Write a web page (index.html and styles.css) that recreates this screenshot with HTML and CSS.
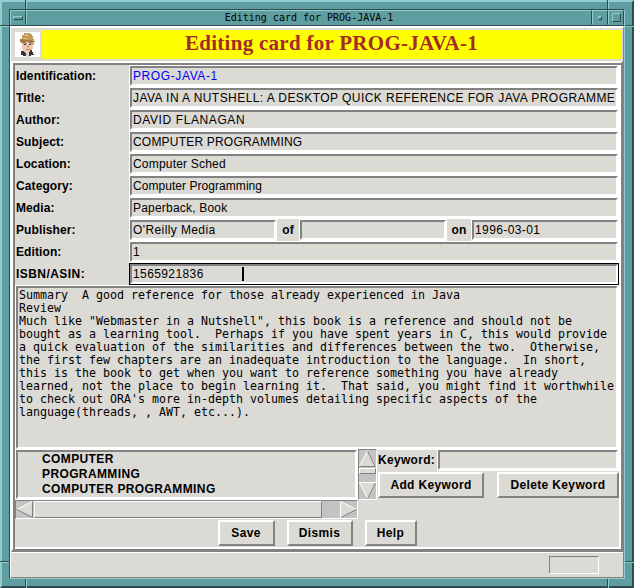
FILE: index.html
```html
<!DOCTYPE html>
<html lang="en">
<head>
<meta charset="utf-8">
<title>Editing card for PROG-JAVA-1</title>
<link rel="stylesheet" href="styles.css">
</head>
<body>
<div class="window">
  <i class="tick th tl1"></i><i class="tick th tr1"></i><i class="tick th bl1"></i><i class="tick th br1"></i>
  <i class="tick tv tl2"></i><i class="tick tv tr2"></i><i class="tick tv bl2"></i><i class="tick tv br2"></i>
  <div class="inner">
    <div class="titlebar">
      <span class="tb-btn menu"><i></i></span>
      <span class="tb-title"><span>Editing card for PROG-JAVA-1</span></span>
      <span class="tb-btn min"><i></i></span>
      <span class="tb-btn max"><i></i></span>
    </div>
    <div class="content">
      <header class="banner">
        <svg class="face" width="25" height="25" viewBox="0 0 25 25" shape-rendering="crispEdges">
          <path fill="#fff" d="M0 0h25v25H0z"/>
          <path fill="#c39a5e" d="M9 1h6v1h2v2h1v3h1v2H6V7h1V3h2z"/>
          <path fill="#a67a3c" d="M5 7h3v1h9v1h3v1h-2v1H6v-1H5z"/>
          <path fill="#e0bd86" d="M10 2h3v2h-3zM9 6h3v1H9z"/>
          <path fill="#efc5ab" d="M7 10h11v7h-1v3h-2v2h-5v-2H8v-3H7z"/>
          <path fill="#a67a3c" d="M6 9h13v1h-1v1h-4v-1h-3v1H6z"/>
          <path fill="#9a9da0" d="M8 11h4v1H8zM14 11h5v1h-5zM18 12h1v1h-1z"/>
          <path fill="#54463f" d="M9 12h2v1H9zM14 12h2v1h-2z"/>
          <path fill="#c9836f" d="M12 14h2v1h-2zM11 17h4v1h-4z"/>
          <path fill="#333" d="M6 19h3v1h2v2h3v-2h1v-2h2v2h1v2h1v1h-3v1H8v-1H6z"/>
          <path fill="#d8d8dc" d="M10 20h1v1h3v1h-3zM11 22h3v3h-3z"/>
        </svg>
        <h1><span>Editing card for PROG-JAVA-1</span></h1>
      </header>
      <main class="card">
        <div class="row"><label>Identification:</label><div class="field blue wide">PROG-JAVA-1</div></div>
        <div class="row"><label>Title:</label><div class="field long">JAVA IN A NUTSHELL: A DESKTOP QUICK REFERENCE FOR JAVA PROGRAMME</div></div>
        <div class="row"><label>Author:</label><div class="field wide">DAVID FLANAGAN</div></div>
        <div class="row"><label>Subject:</label><div class="field">COMPUTER PROGRAMMING</div></div>
        <div class="row"><label>Location:</label><div class="field">Computer Sched</div></div>
        <div class="row"><label>Category:</label><div class="field tight">Computer Programming</div></div>
        <div class="row"><label>Media:</label><div class="field">Paperback, Book</div></div>
        <div class="row"><label>Publisher:</label>
          <div class="field part loose">O'Reilly Media</div><b class="mid">of</b>
          <div class="field part"></div><b class="mid on">on</b>
          <div class="field loose">1996-03-01</div></div>
        <div class="row"><label>Edition:</label><div class="field">1</div></div>
        <div class="row"><label class="isbn">ISBN/ASIN:</label><div class="field focus loose">1565921836<i class="caret"></i></div></div>
        <pre class="notes">Summary  A good reference for those already experienced in Java
Review
Much like "Webmaster in a Nutshell", this book is a reference and should not be
bought as a learning tool.  Perhaps if you have spent years in C, this would provide
a quick evaluation of the similarities and differences between the two.  Otherwise,
the first few chapters are an inadequate introduction to the language.  In short,
this is the book to get when you want to reference something you have already
learned, not the place to begin learning it.  That said, you might find it worthwhile
to check out ORA's more in-depth volumes detailing specific aspects of the
language(threads, , AWT, etc...).</pre>
        <div class="keywords">
          <div class="listcol">
            <ul class="list"><li>COMPUTER</li><li>PROGRAMMING</li><li>COMPUTER PROGRAMMING</li></ul>
            <div class="hbar">
              <svg width="17" height="17" viewBox="0 0 17 17"><path fill="#dcdad5" d="M1 8.5 16 1v15z"/><path fill="none" stroke="#fff" d="M1 8.5 16 .5"/><path fill="none" stroke="#828282" d="M1 8.5 16.500 16.500V1"/></svg>
              <div class="thumb"></div>
              <svg class="right" width="17" height="17" viewBox="0 0 17 17"><path fill="#dcdad5" d="M0 0 16 8.500 0 17z"/><path fill="none" stroke="#fff" d="M.5 17V.5l16 8"/><path fill="none" stroke="#828282" d="M1 16.500 16.500 8.500"/></svg>
            </div>
          </div>
          <div class="vbar">
            <svg width="17" height="17" viewBox="0 0 17 17"><path fill="#dcdad5" d="M8.500 0 17 17H0z"/><path fill="none" stroke="#fff" d="M.5 16 8.500 .5"/><path fill="none" stroke="#828282" d="M8.500 1l7.500 15.500H0"/></svg>
            <div class="thumb"></div>
            <svg class="down" width="17" height="17" viewBox="0 0 17 17"><path fill="#dcdad5" d="M0 0h17L8.500 17z"/><path fill="none" stroke="#fff" d="M17 .5H.5L8.500 16"/><path fill="none" stroke="#828282" d="M16.500 1 8.500 16.500"/></svg>
          </div>
          <div class="kwcol">
            <div class="kwrow"><label>Keyword:</label><div class="field"></div></div>
            <div class="kwbtns"><button class="add">Add Keyword</button><button class="del">Delete Keyword</button></div>
          </div>
        </div>
        <div class="actions"><button class="b1">Save</button><button class="b2">Dismis</button><button class="b3">Help</button></div>
      </main>
      <footer class="status"><div class="cell"></div></footer>
    </div>
  </div>
</div>
</body>
</html>
```

FILE: styles.css
```css
* { box-sizing: border-box; }
body { margin: 0; font: 12px/15px "Liberation Sans", Arial, sans-serif; color: #000; }
.window {
  position: relative; width: 634px; height: 588px; padding: 7px 7px 7px 7px;
  background: #5f9ea0; border: 2px solid; border-color: #93cccc #32494b #32494b #93cccc;
}
.tick { position: absolute; }
.th { width: 9px; height: 2px; background: linear-gradient(#32494b 50%, #93cccc 50%); }
.tv { width: 2px; height: 9px; background: linear-gradient(90deg, #32494b 50%, #93cccc 50%); }
.tl1 { left: -2px; top: 23px; } .tr1 { right: -2px; top: 23px; }
.bl1 { left: -2px; top: 559px; } .br1 { right: -2px; top: 559px; }
.tl2 { left: 23px; top: -2px; } .tr2 { left: 605px; top: -2px; }
.bl2 { left: 23px; bottom: -2px; } .br2 { left: 605px; bottom: -2px; }
.inner {
  height: 570px; border: 1px solid; border-color: #32494b #93cccc #93cccc #32494b;
}
.titlebar { display: flex; height: 16px; border-bottom: 1px solid #32494b; }
.titlebar > span { border: 1px solid; border-color: #93cccc #32494b #5f9ea0 #93cccc; }
.tb-btn { width: 16px; display: flex; align-items: center; justify-content: center; }
.tb-btn i { display: block; border: 1px solid; border-color: #93cccc #32494b #32494b #93cccc; }
.menu i { width: 10px; height: 4px; }
.min i { width: 4px; height: 4px; }
.max i { width: 9px; height: 9px; }
.tb-title {
  flex: 1; text-align: center; font: 10px/14px "DejaVu Sans Mono", monospace; white-space: pre;
}
.content {
  height: 552px; background: #dcdad5; border: 1px solid; border-top-width: 2px;
  border-color: #fff #828282 #828282 #fff;
}
.banner { display: flex; height: 33px; padding: 2px 2px 2px 4px; }
.face { flex: none; margin: 2px 2px 0 0; }
.banner h1 {
  flex: 1; margin: 0; height: 29px; background: #ff0; color: #a52a2a; text-align: center;
  font: bold 21px/27px "Liberation Serif", serif; letter-spacing: .28px; white-space: pre;
}
.card {
  height: 491px; border: 2px solid; border-bottom-width: 3px;
  border-color: #fff #828282 #828282 #fff; padding: 2px 2px 0 2px;
  box-shadow: inset 2px 2px #828282, inset -2px -2px #fff;
}
.row { display: flex; height: 22px; }
label, .mid { font-weight: bold; line-height: 22px; letter-spacing: .1px; }
.row label { width: 114px; padding-left: 1px; flex: none; }
.row .isbn { letter-spacing: .45px; }
/* Sunken entry with a one-pixel highlight ring */
.field {
  flex: 1; height: 20px; margin: 1px; border: 2px solid;
  border-color: #828282 #fff #fff #828282; padding-left: 1px; line-height: 16px;
  white-space: pre; display: flex; box-shadow: 0 0 0 1px #fff; letter-spacing: .2px;
}
.focus { box-shadow: 0 0 0 1px #000; }
.part { flex: none; width: 146px; }
.wide { letter-spacing: .6px; }
.long { letter-spacing: .44px; }
.loose { letter-spacing: .4px; }
.tight { letter-spacing: .05px; }
.blue { color: #00f; }
.mid { width: 22px; text-align: center; }
.mid.on { width: 24px; }
.caret { width: 2px; height: 14px; background: #000; margin: 1px 0 0 38px; }
.notes {
  margin: 1px 1px 0; height: 163px; border: 2px solid; border-color: #828282 #fff #fff #828282;
  box-shadow: 0 0 0 1px #fff;
  padding: 1px 0 0 1px; font: 11.63px/13px "DejaVu Sans Mono", monospace;
}
.keywords { display: flex; height: 70px; }
.listcol { width: 343px; }
.list {
  list-style: none; margin: 1px; height: 49px; padding: 0 0 0 24px; border: 2px solid;
  border-color: #828282 #fff #fff #828282; font-weight: bold; box-shadow: 0 0 0 1px #fff;
  letter-spacing: .38px;
}
.hbar, .vbar {
  display: flex; background: #c3c3c3; border: 1px solid; border-color: #828282 #fff #fff #828282;
}
.hbar { height: 19px; }
.thumb { background: #dcdad5; border: 1px solid; border-color: #fff #828282 #828282 #fff; }
.hbar .thumb { width: 288px; margin-left: 1px; }
.right { margin-left: auto; }
.vbar { width: 19px; height: 51px; flex-direction: column; }
.vbar .thumb { height: 6px; margin-top: 1px; }
.down { margin-top: auto; }
.kwcol { flex: 1; padding-left: 1px; }
.kwrow { display: flex; height: 22px; }
.kwrow label { width: 59px; letter-spacing: .3px; }
button {
  font: bold 12px/15px "Liberation Sans", Arial, sans-serif; letter-spacing: .35px;
  background: #dcdad5; padding: 0; border: 2px solid;
  border-color: #fff #828282 #828282 #fff; height: 26px; border-radius: 0; color: #000;
}
.kwbtns { display: flex; justify-content: space-between; margin-top: 1px; }
.add { width: 106px; } .del { width: 122px; }
.actions { display: flex; justify-content: center; gap: 12px; margin-top: 1px; }
.b1 { width: 57px; } .b2 { width: 66px; } .b3 { width: 52px; }
.status { height: 25px; border-top: 1px solid #fff; padding: 3px 24px 0 0; }
.cell { width: 50px; height: 18px; margin-left: auto; border: 1px solid; border-color: #828282 #fff #fff #828282; }
```
